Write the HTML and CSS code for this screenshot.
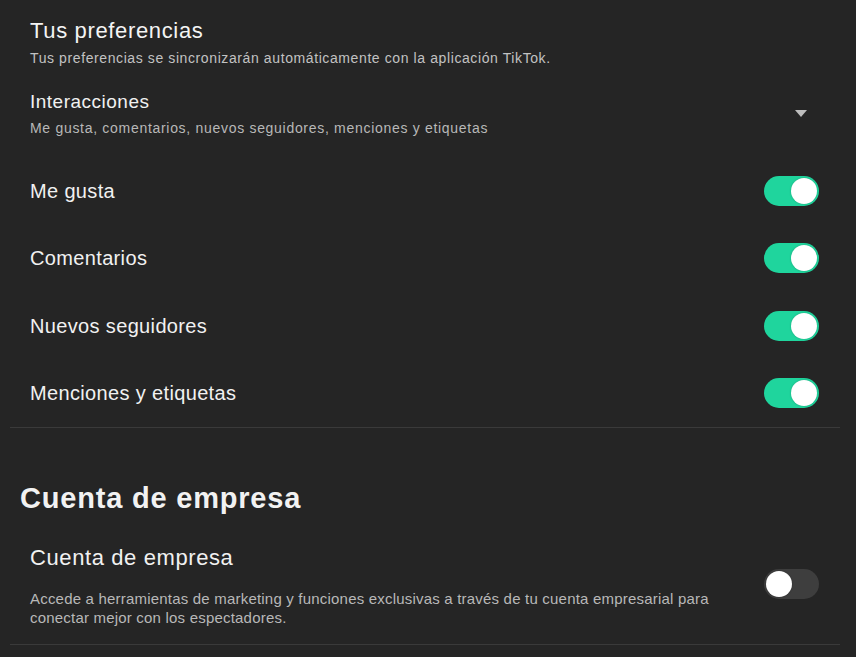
FILE: index.html
```html
<!DOCTYPE html>
<html lang="es">
<head>
<meta charset="utf-8">
<title>Preferencias</title>
<link rel="stylesheet" href="styles.css">
</head>
<body>
<div class="page">
  <section class="prefs">
    <h2 class="title">Tus preferencias</h2>
    <p class="subtitle">Tus preferencias se sincronizarán automáticamente con la aplicación TikTok.</p>
    <div class="group-head">
      <div class="group-text">
        <div class="group-title">Interacciones</div>
        <div class="group-sub">Me gusta, comentarios, nuevos seguidores, menciones y etiquetas</div>
      </div>
      <span class="caret"></span>
    </div>
    <div class="rows">
      <div class="row"><span class="row-label">Me gusta</span><span class="toggle on"><span class="knob"></span></span></div>
      <div class="row"><span class="row-label">Comentarios</span><span class="toggle on"><span class="knob"></span></span></div>
      <div class="row"><span class="row-label">Nuevos seguidores</span><span class="toggle on"><span class="knob"></span></span></div>
      <div class="row"><span class="row-label">Menciones y etiquetas</span><span class="toggle on"><span class="knob"></span></span></div>
    </div>
  </section>
  <hr class="divider">
  <section class="business">
    <h1 class="section-title">Cuenta de empresa</h1>
    <div class="biz-item">
      <div class="biz-text">
        <div class="biz-title">Cuenta de empresa</div>
        <p class="biz-desc">Accede a herramientas de marketing y funciones exclusivas a través de tu cuenta empresarial para conectar mejor con los espectadores.</p>
      </div>
      <span class="toggle off"><span class="knob"></span></span>
    </div>
  </section>
  <hr class="divider">
</div>
</body>
</html>
```
FILE: styles.css
```css
* { box-sizing: border-box; }
html, body {
  margin: 0;
  padding: 0;
  background: #252525;
  color: #f1f1f1;
  font-family: "Liberation Sans", Arial, sans-serif;
}
.page {
  padding: 0 16px 0 10px;
}
.prefs {
  padding: 0 21px 0 20px;
}
.title {
  margin: 0;
  padding-top: 18px;
  font-size: 22px;
  line-height: 26px;
  letter-spacing: 0.65px;
  font-weight: 500;
  color: #f4f4f4;
}
.subtitle {
  margin: 5px 0 0;
  font-size: 14px;
  line-height: 18px;
  letter-spacing: 0.6px;
  color: #c2c2c2;
}
.group-head {
  display: flex;
  align-items: center;
  justify-content: space-between;
  padding-top: 23px;
}
.group-title {
  font-size: 19px;
  line-height: 24px;
  letter-spacing: 0.5px;
  color: #f1f1f1;
}
.group-sub {
  margin-top: 5px;
  font-size: 14px;
  line-height: 18px;
  letter-spacing: 0.7px;
  color: #b8b8b8;
}
.caret {
  width: 0;
  height: 0;
  border-left: 6px solid transparent;
  border-right: 6px solid transparent;
  border-top: 7px solid #bdbdbd;
  margin-right: 12px;
}
.rows {
  margin-top: 20px;
}
.row {
  height: 67.5px;
  display: flex;
  align-items: center;
  justify-content: space-between;
}
.row-label {
  font-size: 20px;
  line-height: 24px;
  letter-spacing: 0.35px;
  color: #f1f1f1;
}
.toggle {
  position: relative;
  display: inline-block;
  width: 55px;
  height: 30px;
  border-radius: 15px;
  flex: none;
}
.toggle.on { background: #1fd59d; }
.toggle.off { background: #3e3e3e; }
.knob {
  position: absolute;
  top: 2px;
  width: 26px;
  height: 26px;
  border-radius: 50%;
  background: #ffffff;
  box-shadow: 0 0 2px rgba(0, 0, 0, 0.25);
}
.toggle.on .knob { right: 2px; }
.toggle.off .knob { left: 2px; }
.divider {
  margin: 0;
  border: 0;
  height: 1px;
  background: #3a3a3a;
}
.business {
  padding: 0 21px 0 10px;
}
.section-title {
  margin: 0;
  padding-top: 53px;
  font-size: 29px;
  line-height: 34px;
  letter-spacing: 0.8px;
  font-weight: 700;
  color: #f2f2f2;
}
.biz-item {
  display: flex;
  align-items: center;
  justify-content: space-between;
  padding: 30px 0 17px 10px;
}
.biz-title {
  font-size: 22px;
  line-height: 26px;
  letter-spacing: 0.6px;
  color: #f1f1f1;
}
.biz-desc {
  margin: 18px 0 0;
  width: 700px;
  font-size: 15px;
  line-height: 19px;
  letter-spacing: 0.2px;
  color: #b8b8b8;
}
.business .toggle {
  margin-bottom: 5px;
}
```
